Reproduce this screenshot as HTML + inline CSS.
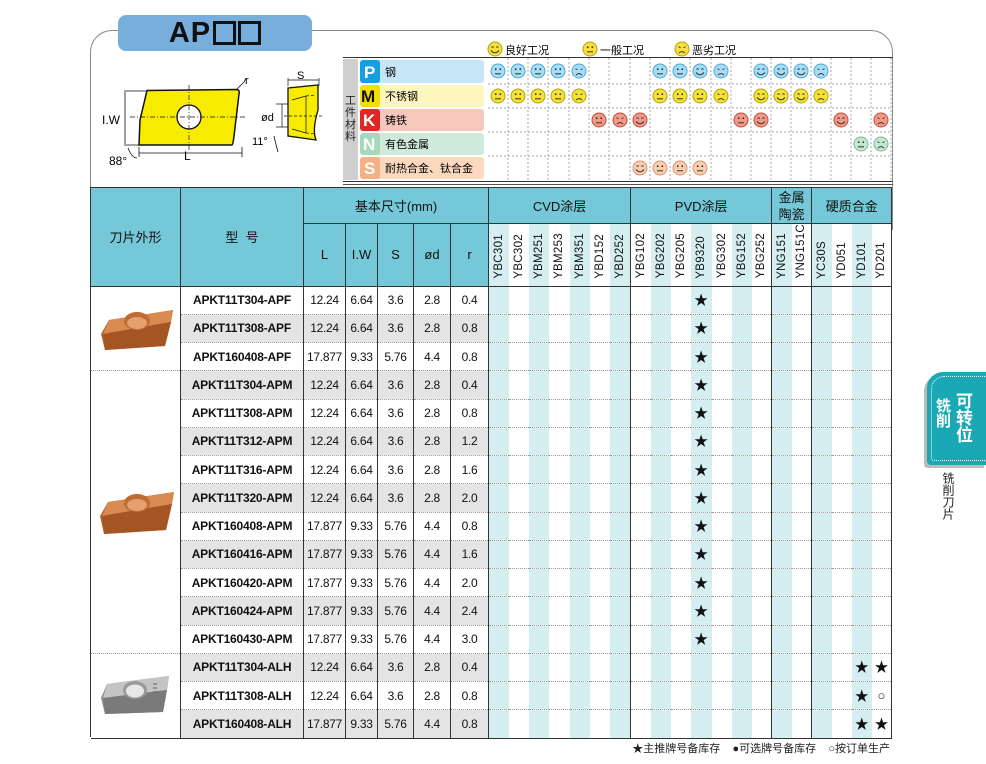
<!DOCTYPE html>
<html><head><meta charset="utf-8">
<style>
*{margin:0;padding:0;box-sizing:border-box}
body{width:986px;height:764px;background:#fff;position:relative;overflow:hidden;font-family:"Liberation Sans","Noto Sans CJK SC",sans-serif;color:#111}
.frame{position:absolute;left:90px;top:30px;width:803px;height:200px;border:1px solid #8a8a8a;border-bottom:none;border-radius:22px 22px 0 0}
.pill{position:absolute;left:118px;top:15px;width:194px;height:36px;background:#78aedc;border-radius:8px;text-align:center;font:bold 29px/36px "Liberation Sans",sans-serif;color:#111;letter-spacing:1px}
.pill i{display:inline-block;width:23px;height:24px;border:3px solid #111;vertical-align:-3px;margin-left:2px}
table{position:absolute;left:90px;top:187px;border-collapse:collapse;table-layout:fixed;width:801px;background:#fff}
td,th{padding:0;text-align:center;vertical-align:middle;font-size:12px;border-bottom:1px dotted #999;overflow:hidden;white-space:nowrap}
th{background:#74c8d7;font-weight:normal;color:#111;border:1px solid #333;font-size:13px}
th.v{background:transparent;border-left:none;border-right:none;vertical-align:bottom;padding-bottom:4px}
th.v span{writing-mode:vertical-rl;transform:rotate(180deg);font-size:11.5px;display:inline-block;letter-spacing:.3px}
th.v.b,td.b{border-left:1px solid #333}
tr.d{height:28.25px}
td.m{font-weight:bold;font-size:12px;border-right:1px solid #333;letter-spacing:-.2px}
td.n{border-right:1px solid #333;font-size:12px;letter-spacing:-.3px}
td.z{background:#e4e4e4}
td.s{border-right:1px solid #333;border-bottom:1px dotted #999;background:#fff}
td.k{font-size:14px}
.tab{position:absolute;left:927px;top:372px;width:60px;height:93px;background:#19a8b4;border-radius:16px 0 0 4px;box-shadow:-3px 3px 0 #bbb}
.tab:after{content:"";position:absolute;left:4px;top:4px;right:-4px;bottom:4px;border:1px dotted #fff;border-right:none;border-radius:13px 0 0 3px}
.tt{position:absolute;color:#fff;font-weight:bold;writing-mode:vertical-rl;font-family:"Noto Sans CJK SC",sans-serif}
.foot{position:absolute;right:96px;top:740px;font-size:11px;color:#222;font-family:"Liberation Sans","Noto Sans CJK SC",sans-serif}
</style></head><body>
<div class="frame"></div>
<div class="pill">AP<i></i><i></i></div>

<svg style="position:absolute;left:0;top:0" width="986" height="190" font-family="Liberation Sans, Noto Sans CJK SC, sans-serif">
<defs>
<symbol id="n" viewBox="-8 -8 16 16"><circle r="7" stroke-width="1"/><circle cx="-2.3" cy="-1.8" r="0.9" fill="#333" stroke="none"/><circle cx="2.3" cy="-1.8" r="0.9" fill="#333" stroke="none"/><path d="M-3 2.8H3" stroke="#333" stroke-width="1" fill="none"/></symbol>
<symbol id="h" viewBox="-8 -8 16 16"><circle r="7" stroke-width="1"/><path d="M-3.5 -1.5q1.2 -1.5 2.2 0M1.3 -1.5q1.2 -1.5 2.2 0" stroke="#333" stroke-width=".9" fill="none"/><path d="M-4 1.5Q0 6 4 1.5" stroke="#333" stroke-width="1" fill="none"/></symbol>
<symbol id="s" viewBox="-8 -8 16 16"><circle r="7" stroke-width="1"/><path d="M-3.5 -2.2l2 .8M3.5 -2.2l-2 .8" stroke="#333" stroke-width=".9" fill="none"/><path d="M-3 4Q0 1.2 3 4" stroke="#333" stroke-width="1" fill="none"/></symbol>
</defs>
<use href="#h" x="487" y="41" width="16" height="16" fill="#f4e040" stroke="#c0a000"/><text x="505" y="54" font-size="11">良好工况</text>
<use href="#n" x="582" y="41" width="16" height="16" fill="#f4e040" stroke="#c0a000"/><text x="600" y="54" font-size="11">一般工况</text>
<use href="#s" x="674" y="41" width="16" height="16" fill="#f4e040" stroke="#c0a000"/><text x="692" y="54" font-size="11">恶劣工况</text>
<line x1="343" y1="57.5" x2="893" y2="57.5" stroke="#333"/>
<rect x="343" y="59" width="15" height="121" fill="#cfcfcf"/>
<text font-size="11" fill="#222"><tspan x="345" y="104">工</tspan><tspan x="345" y="116">件</tspan><tspan x="345" y="128">材</tspan><tspan x="345" y="140">料</tspan></text>
<rect x="360" y="60" width="124" height="23" rx="3" fill="#c6e6f7"/><rect x="360" y="60" width="20" height="23" rx="3" fill="#159fdf"/><text x="364" y="78" font-size="17" font-weight="bold" fill="#fff">P</text><text x="385" y="76" font-size="11">钢</text>
<rect x="360" y="85" width="124" height="22" rx="3" fill="#fdf6bf"/><rect x="360" y="85" width="20" height="22" rx="3" fill="#f3e000"/><text x="361" y="102" font-size="17" font-weight="bold" fill="#111">M</text><text x="385" y="100" font-size="11">不锈钢</text>
<rect x="360" y="109" width="124" height="22" rx="3" fill="#f6c8bb"/><rect x="360" y="109" width="20" height="22" rx="3" fill="#e02626"/><text x="363" y="126" font-size="17" font-weight="bold" fill="#fff">K</text><text x="385" y="124" font-size="11">铸铁</text>
<rect x="360" y="133" width="124" height="22" rx="3" fill="#cfe9da"/><rect x="360" y="133" width="20" height="22" rx="3" fill="#a6d9b9"/><text x="363" y="150" font-size="17" font-weight="bold" fill="#fff">N</text><text x="385" y="148" font-size="11">有色金属</text>
<rect x="360" y="157" width="124" height="22" rx="3" fill="#fcd8bf"/><rect x="360" y="157" width="20" height="22" rx="3" fill="#f5b083"/><text x="364" y="174" font-size="17" font-weight="bold" fill="#fff">S</text><text x="385" y="172" font-size="11">耐热合金、钛合金</text>
<g stroke="#aaa" stroke-dasharray="2 2" stroke-width="1">
<path d="M488 84H891M488 108H891M488 132H891M488 156H891"/>
<path d="M508 58V180M528 58V180M548 58V180M569 58V180M589 58V180M609 58V180M630 58V180M650 58V180M670 58V180M690 58V180M711 58V180M731 58V180M751 58V180M771 58V180M791 58V180M811 58V180M831 58V180M851 58V180M871 58V180M891 58V180"/>
</g>
<line x1="343" y1="181.5" x2="893" y2="181.5" stroke="#333"/>
<line x1="343" y1="184.5" x2="893" y2="184.5" stroke="#555"/>
<g fill="#a6dcf4" stroke="#4aa8d8">
<use href="#n" x="490" y="63" width="16" height="16"/><use href="#n" x="510" y="63" width="16" height="16"/><use href="#n" x="530" y="63" width="16" height="16"/><use href="#n" x="550" y="63" width="16" height="16"/><use href="#s" x="571" y="63" width="16" height="16"/>
<use href="#n" x="652" y="63" width="16" height="16"/><use href="#n" x="672" y="63" width="16" height="16"/><use href="#h" x="692" y="63" width="16" height="16"/><use href="#s" x="713" y="63" width="16" height="16"/>
<use href="#h" x="753" y="63" width="16" height="16"/><use href="#h" x="773" y="63" width="16" height="16"/><use href="#h" x="793" y="63" width="16" height="16"/><use href="#s" x="813" y="63" width="16" height="16"/>
</g>
<g fill="#f3e23a" stroke="#b8a000">
<use href="#n" x="490" y="88" width="16" height="16"/><use href="#n" x="510" y="88" width="16" height="16"/><use href="#n" x="530" y="88" width="16" height="16"/><use href="#n" x="550" y="88" width="16" height="16"/><use href="#s" x="571" y="88" width="16" height="16"/>
<use href="#n" x="652" y="88" width="16" height="16"/><use href="#n" x="672" y="88" width="16" height="16"/><use href="#n" x="692" y="88" width="16" height="16"/><use href="#s" x="713" y="88" width="16" height="16"/>
<use href="#h" x="753" y="88" width="16" height="16"/><use href="#h" x="773" y="88" width="16" height="16"/><use href="#h" x="793" y="88" width="16" height="16"/><use href="#s" x="813" y="88" width="16" height="16"/>
</g>
<g fill="#f29a88" stroke="#c04a3a">
<use href="#n" x="591" y="112" width="16" height="16"/><use href="#s" x="612" y="112" width="16" height="16"/><use href="#h" x="632" y="112" width="16" height="16"/>
<use href="#n" x="733" y="112" width="16" height="16"/><use href="#h" x="753" y="112" width="16" height="16"/>
<use href="#h" x="833" y="112" width="16" height="16"/><use href="#s" x="873" y="112" width="16" height="16"/>
</g>
<g fill="#c4e6d2" stroke="#7ab898">
<use href="#n" x="853" y="136" width="16" height="16"/><use href="#s" x="873" y="136" width="16" height="16"/>
</g>
<g fill="#f9cdb0" stroke="#d89070">
<use href="#h" x="632" y="160" width="16" height="16"/><use href="#n" x="652" y="160" width="16" height="16"/><use href="#n" x="672" y="160" width="16" height="16"/><use href="#n" x="692" y="160" width="16" height="16"/>
</g>
<path d="M147 90.5L237 89.5Q240 90 239 94L234 136Q233 145 232 145L139 145L140 120Z" fill="#f7ec00" stroke="#111" stroke-width="1.5"/>
<circle cx="189" cy="117" r="12" fill="#fff" stroke="#111" stroke-width="1.3"/>
<path d="M189 85V150M130 117H246" stroke="#111" stroke-width=".7" stroke-dasharray="5 2 1 2"/>
<path d="M124 91H147M124 145H139M125 92V144M139 153H242M139 147V157M242 147V157" stroke="#111" stroke-width=".8" fill="none"/>
<path d="M236 90L244 82M244 82L246 78" stroke="#111" stroke-width=".8"/>
<text x="245" y="84" font-size="11">r</text>
<text x="102" y="124" font-size="12">I.W</text>
<text x="184" y="160" font-size="12">L</text>
<text x="109" y="165" font-size="12">88°</text>
<path d="M128 148Q132 158 137 158" stroke="#111" stroke-width=".8" fill="none"/>
<path d="M288 88L318 85L318 110Q312 130 316 140L288 136Z" fill="#f7ec00" stroke="#111" stroke-width="1.3"/>
<path d="M288 80H319M288 78V86M319 78V86M276 104H288M276 127H288M282 104V127M292 100L306 96V133L292 129" stroke="#111" stroke-width=".7" fill="none"/>
<path d="M306 96L316 95M306 133L316 134M284 116H322" stroke="#111" stroke-width=".7" stroke-dasharray="3 2" fill="none"/>
<text x="297" y="79" font-size="11">S</text>
<text x="261" y="121" font-size="11">ød</text>
<text x="252" y="145" font-size="11">11°</text>
<path d="M274 136Q276 145 278 152" stroke="#111" stroke-width=".8" fill="none"/>
</svg>

<table>
<colgroup>
<col style="width:90px"><col style="width:123px"><col style="width:42px"><col style="width:32px"><col style="width:36px"><col style="width:37px"><col style="width:38px">
<col style="width:20px;background:#d4eef1"><col style="width:20px"><col style="width:20px;background:#d4eef1"><col style="width:21px"><col style="width:20px;background:#d4eef1"><col style="width:20px"><col style="width:21px;background:#d4eef1">
<col style="width:20px"><col style="width:20px;background:#d4eef1"><col style="width:20px"><col style="width:21px;background:#d4eef1"><col style="width:20px"><col style="width:20px;background:#d4eef1"><col style="width:20px">
<col style="width:20px;background:#d4eef1"><col style="width:20px">
<col style="width:20px;background:#d4eef1"><col style="width:20px"><col style="width:20px;background:#d4eef1"><col style="width:20px">
</colgroup>
<tr style="height:36px"><th rowspan="2">刀片外形</th><th rowspan="2">型&nbsp;&nbsp;号</th><th colspan="5">基本尺寸(mm)</th><th colspan="7">CVD涂层</th><th colspan="7">PVD涂层</th><th colspan="2" style="line-height:17px">金属<br>陶瓷</th><th colspan="4">硬质合金</th></tr>
<tr style="height:61px"><th>L</th><th>I.W</th><th>S</th><th>ød</th><th>r</th>
<th class="v b"><span>YBC301</span></th><th class="v"><span>YBC302</span></th><th class="v"><span>YBM251</span></th><th class="v"><span>YBM253</span></th><th class="v"><span>YBM351</span></th><th class="v"><span>YBD152</span></th><th class="v"><span>YBD252</span></th>
<th class="v b"><span>YBG102</span></th><th class="v"><span>YBG202</span></th><th class="v"><span>YBG205</span></th><th class="v"><span>YB9320</span></th><th class="v"><span>YBG302</span></th><th class="v"><span>YBG152</span></th><th class="v"><span>YBG252</span></th>
<th class="v b"><span>YNG151</span></th><th class="v"><span>YNG151C</span></th>
<th class="v b"><span>YC30S</span></th><th class="v"><span>YD051</span></th><th class="v"><span>YD101</span></th><th class="v" style="border-right:1px solid #333"><span>YD201</span></th></tr>

<tr class="d"><td class="s" rowspan="3"><svg width="80" height="50" viewBox="0 0 80 50"><path d="M14 18L78 8L76 20L70 44L10 48L6 32Z" fill="#b8622e"/><path d="M14 18L78 8L76 20L8 32Z" fill="#d88a50"/><path d="M8 32L76 20L70 44L10 48Z" fill="#a55424"/><ellipse cx="42" cy="19" rx="13" ry="9" fill="#c06a34"/><ellipse cx="42" cy="21" rx="10" ry="6" fill="#e6a070"/></svg></td><td class="m">APKT11T304-APF</td><td class="n">12.24</td><td class="n">6.64</td><td class="n">3.6</td><td class="n">2.8</td><td class="n">0.4</td><td class="b"></td><td></td><td></td><td></td><td></td><td></td><td></td><td class="b"></td><td></td><td></td><td class="k">★</td><td></td><td></td><td></td><td class="b"></td><td></td><td class="b"></td><td></td><td></td><td style="border-right:1px solid #333"></td></tr>
<tr class="d"><td class="m z">APKT11T308-APF</td><td class="n z">12.24</td><td class="n z">6.64</td><td class="n z">3.6</td><td class="n z">2.8</td><td class="n z">0.8</td><td class="b"></td><td></td><td></td><td></td><td></td><td></td><td></td><td class="b"></td><td></td><td></td><td class="k">★</td><td></td><td></td><td></td><td class="b"></td><td></td><td class="b"></td><td></td><td></td><td style="border-right:1px solid #333"></td></tr>
<tr class="d"><td class="m">APKT160408-APF</td><td class="n">17.877</td><td class="n">9.33</td><td class="n">5.76</td><td class="n">4.4</td><td class="n">0.8</td><td class="b"></td><td></td><td></td><td></td><td></td><td></td><td></td><td class="b"></td><td></td><td></td><td class="k">★</td><td></td><td></td><td></td><td class="b"></td><td></td><td class="b"></td><td></td><td></td><td style="border-right:1px solid #333"></td></tr>

<tr class="d"><td class="s" rowspan="10"><svg width="82" height="50" viewBox="0 0 82 50"><path d="M14 16L80 6L78 18L72 44L10 48L6 30Z" fill="#b8622e"/><path d="M14 16L80 6L78 18L8 30Z" fill="#d88a50"/><path d="M8 30L78 18L72 44L10 48Z" fill="#a55424"/><ellipse cx="43" cy="17" rx="13" ry="9" fill="#c06a34"/><ellipse cx="43" cy="19" rx="10" ry="6" fill="#e6a070"/></svg></td><td class="m z">APKT11T304-APM</td><td class="n z">12.24</td><td class="n z">6.64</td><td class="n z">3.6</td><td class="n z">2.8</td><td class="n z">0.4</td><td class="b"></td><td></td><td></td><td></td><td></td><td></td><td></td><td class="b"></td><td></td><td></td><td class="k">★</td><td></td><td></td><td></td><td class="b"></td><td></td><td class="b"></td><td></td><td></td><td style="border-right:1px solid #333"></td></tr>
<tr class="d"><td class="m">APKT11T308-APM</td><td class="n">12.24</td><td class="n">6.64</td><td class="n">3.6</td><td class="n">2.8</td><td class="n">0.8</td><td class="b"></td><td></td><td></td><td></td><td></td><td></td><td></td><td class="b"></td><td></td><td></td><td class="k">★</td><td></td><td></td><td></td><td class="b"></td><td></td><td class="b"></td><td></td><td></td><td style="border-right:1px solid #333"></td></tr>
<tr class="d"><td class="m z">APKT11T312-APM</td><td class="n z">12.24</td><td class="n z">6.64</td><td class="n z">3.6</td><td class="n z">2.8</td><td class="n z">1.2</td><td class="b"></td><td></td><td></td><td></td><td></td><td></td><td></td><td class="b"></td><td></td><td></td><td class="k">★</td><td></td><td></td><td></td><td class="b"></td><td></td><td class="b"></td><td></td><td></td><td style="border-right:1px solid #333"></td></tr>
<tr class="d"><td class="m">APKT11T316-APM</td><td class="n">12.24</td><td class="n">6.64</td><td class="n">3.6</td><td class="n">2.8</td><td class="n">1.6</td><td class="b"></td><td></td><td></td><td></td><td></td><td></td><td></td><td class="b"></td><td></td><td></td><td class="k">★</td><td></td><td></td><td></td><td class="b"></td><td></td><td class="b"></td><td></td><td></td><td style="border-right:1px solid #333"></td></tr>
<tr class="d"><td class="m z">APKT11T320-APM</td><td class="n z">12.24</td><td class="n z">6.64</td><td class="n z">3.6</td><td class="n z">2.8</td><td class="n z">2.0</td><td class="b"></td><td></td><td></td><td></td><td></td><td></td><td></td><td class="b"></td><td></td><td></td><td class="k">★</td><td></td><td></td><td></td><td class="b"></td><td></td><td class="b"></td><td></td><td></td><td style="border-right:1px solid #333"></td></tr>
<tr class="d"><td class="m">APKT160408-APM</td><td class="n">17.877</td><td class="n">9.33</td><td class="n">5.76</td><td class="n">4.4</td><td class="n">0.8</td><td class="b"></td><td></td><td></td><td></td><td></td><td></td><td></td><td class="b"></td><td></td><td></td><td class="k">★</td><td></td><td></td><td></td><td class="b"></td><td></td><td class="b"></td><td></td><td></td><td style="border-right:1px solid #333"></td></tr>
<tr class="d"><td class="m z">APKT160416-APM</td><td class="n z">17.877</td><td class="n z">9.33</td><td class="n z">5.76</td><td class="n z">4.4</td><td class="n z">1.6</td><td class="b"></td><td></td><td></td><td></td><td></td><td></td><td></td><td class="b"></td><td></td><td></td><td class="k">★</td><td></td><td></td><td></td><td class="b"></td><td></td><td class="b"></td><td></td><td></td><td style="border-right:1px solid #333"></td></tr>
<tr class="d"><td class="m">APKT160420-APM</td><td class="n">17.877</td><td class="n">9.33</td><td class="n">5.76</td><td class="n">4.4</td><td class="n">2.0</td><td class="b"></td><td></td><td></td><td></td><td></td><td></td><td></td><td class="b"></td><td></td><td></td><td class="k">★</td><td></td><td></td><td></td><td class="b"></td><td></td><td class="b"></td><td></td><td></td><td style="border-right:1px solid #333"></td></tr>
<tr class="d"><td class="m z">APKT160424-APM</td><td class="n z">17.877</td><td class="n z">9.33</td><td class="n z">5.76</td><td class="n z">4.4</td><td class="n z">2.4</td><td class="b"></td><td></td><td></td><td></td><td></td><td></td><td></td><td class="b"></td><td></td><td></td><td class="k">★</td><td></td><td></td><td></td><td class="b"></td><td></td><td class="b"></td><td></td><td></td><td style="border-right:1px solid #333"></td></tr>
<tr class="d"><td class="m">APKT160430-APM</td><td class="n">17.877</td><td class="n">9.33</td><td class="n">5.76</td><td class="n">4.4</td><td class="n">3.0</td><td class="b"></td><td></td><td></td><td></td><td></td><td></td><td></td><td class="b"></td><td></td><td></td><td class="k">★</td><td></td><td></td><td></td><td class="b"></td><td></td><td class="b"></td><td></td><td></td><td style="border-right:1px solid #333"></td></tr>

<tr class="d"><td class="s" rowspan="3" style="border-bottom:1px solid #333"><svg width="76" height="48" viewBox="0 0 76 48"><path d="M10 14L72 6L70 20L66 42L8 44L4 28Z" fill="#8e8e8e"/><path d="M10 14L72 6L70 20L6 28Z" fill="#c4c4c4"/><path d="M6 28L70 20L66 42L8 44Z" fill="#7a7a7a"/><ellipse cx="38" cy="20" rx="12" ry="9" fill="#9a9a9a"/><ellipse cx="38" cy="21" rx="9" ry="6.5" fill="#e8e8e8"/><path d="M56 14h4M56 18h4M56 22h4" stroke="#666"/></svg></td><td class="m z">APKT11T304-ALH</td><td class="n z">12.24</td><td class="n z">6.64</td><td class="n z">3.6</td><td class="n z">2.8</td><td class="n z">0.4</td><td class="b"></td><td></td><td></td><td></td><td></td><td></td><td></td><td class="b"></td><td></td><td></td><td></td><td></td><td></td><td></td><td class="b"></td><td></td><td class="b"></td><td></td><td class="k">★</td><td class="k" style="border-right:1px solid #333">★</td></tr>
<tr class="d"><td class="m">APKT11T308-ALH</td><td class="n">12.24</td><td class="n">6.64</td><td class="n">3.6</td><td class="n">2.8</td><td class="n">0.8</td><td class="b"></td><td></td><td></td><td></td><td></td><td></td><td></td><td class="b"></td><td></td><td></td><td></td><td></td><td></td><td></td><td class="b"></td><td></td><td class="b"></td><td></td><td class="k">★</td><td style="border-right:1px solid #333;font-size:13px">○</td></tr>
<tr class="d" style="border-bottom:1px solid #333"><td class="m z" style="border-bottom:1px solid #333">APKT160408-ALH</td><td class="n z" style="border-bottom:1px solid #333">17.877</td><td class="n z" style="border-bottom:1px solid #333">9.33</td><td class="n z" style="border-bottom:1px solid #333">5.76</td><td class="n z" style="border-bottom:1px solid #333">4.4</td><td class="n z" style="border-bottom:1px solid #333">0.8</td><td class="b"></td><td></td><td></td><td></td><td></td><td></td><td></td><td class="b"></td><td></td><td></td><td></td><td></td><td></td><td></td><td class="b"></td><td></td><td class="b"></td><td></td><td class="k">★</td><td class="k" style="border-right:1px solid #333">★</td></tr>
</table>
<div style="position:absolute;left:90px;top:187px;width:1px;height:550px;background:#333"></div>

<div class="tab"></div>
<div class="tt" style="left:955px;top:392px;font-size:17px;line-height:19px">可转位</div>
<div class="tt" style="left:935px;top:398px;font-size:15px;line-height:17px">铣削</div>
<div style="position:absolute;left:941px;top:472px;writing-mode:vertical-rl;font-size:12px;line-height:14px;color:#222;font-family:'Noto Sans CJK SC',sans-serif">铣削刀片</div>

<div class="foot">★主推牌号备库存&nbsp;&nbsp;&nbsp;&nbsp;●可选牌号备库存&nbsp;&nbsp;&nbsp;&nbsp;○按订单生产</div>
</body></html>
